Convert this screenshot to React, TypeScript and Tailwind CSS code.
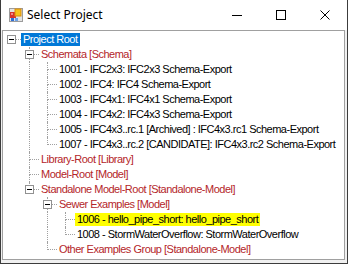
import React from "react";

type Node = {
  t: string;
  l: number;
  kids?: boolean;
  last?: boolean;
  red?: boolean;
  sel?: "blue" | "yellow";
};

const nodes: Node[] = [
  { t: "Project Root", l: 0, kids: true, last: true, sel: "blue" },
  { t: "Schemata [Schema]", l: 1, kids: true, red: true },
  { t: "1001 - IFC2x3: IFC2x3 Schema-Export", l: 2 },
  { t: "1002 - IFC4: IFC4 Schema-Export", l: 2 },
  { t: "1003 - IFC4x1: IFC4x1 Schema-Export", l: 2 },
  { t: "1004 - IFC4x2: IFC4x3 Schema-Export", l: 2 },
  { t: "1005 - IFC4x3..rc.1 [Archived] : IFC4x3.rc1 Schema-Export", l: 2 },
  { t: "1007 - IFC4x3..rc.2 [CANDIDATE]: IFC4x3.rc2 Schema-Export", l: 2, last: true },
  { t: "Library-Root [Library]", l: 1, red: true },
  { t: "Model-Root [Model]", l: 1, red: true },
  { t: "Standalone Model-Root [Standalone-Model]", l: 1, kids: true, last: true, red: true },
  { t: "Sewer Examples [Model]", l: 2, kids: true, red: true },
  { t: "1006 - hello_pipe_short: hello_pipe_short", l: 3, sel: "yellow" },
  { t: "1008 - StormWaterOverflow: StormWaterOverflow", l: 3, last: true },
  { t: "Other Examples Group [Standalone-Model]", l: 2, last: true, red: true },
];

// which ancestor columns still need a vertical line
function guides(list: Node[]) {
  const stack: boolean[] = [];
  return list.map((n) => {
    stack.length = n.l;
    const g = stack.slice();
    stack[n.l] = !n.last;
    return g;
  });
}

function AppIcon() {
  return (
    <svg width="16" height="16" viewBox="0 0 16 16">
      <rect x="1.5" y="1.5" width="13" height="13" fill="#e4e4e4" stroke="#9c9c9c" />
      <rect x="2" y="5" width="6" height="6" fill="#d8322d" />
      <rect x="3" y="6" width="2" height="2" fill="#f08a86" />
      <rect x="7" y="2" width="6" height="7" fill="#f6c31a" stroke="#d98b0c" strokeWidth="1" />
      <rect x="3" y="11" width="3" height="3" fill="#2f6fd6" />
      <rect x="7" y="11" width="3" height="3" fill="#6fa3e6" />
    </svg>
  );
}

function Row({ n, g }: { n: Node; g: boolean[] }) {
  const textCls =
    n.sel === "blue"
      ? "bg-[#0078d7] text-white"
      : n.sel === "yellow"
      ? "bg-[#ffff00] text-black"
      : n.red
      ? "text-[#b4262a]"
      : "text-black";
  return (
    <div className="flex h-[15px] items-center">
      {g.map((c, i) => (
        <div key={i} className="relative h-full w-[18px] shrink-0">
          {c && <div className="absolute left-[8px] top-0 h-full border-l border-dotted border-[#a0a0a0]" />}
        </div>
      ))}
      <div className="relative h-full w-[18px] shrink-0">
        {n.l > 0 && <div className="absolute left-[8px] top-0 h-[8px] border-l border-dotted border-[#a0a0a0]" />}
        {!n.last && <div className="absolute left-[8px] top-[8px] bottom-0 border-l border-dotted border-[#a0a0a0]" />}
        <div className="absolute left-[9px] right-0 top-[7px] border-t border-dotted border-[#a0a0a0]" />
        {n.kids && (
          <div className="absolute left-[4px] top-[3px] flex h-[9px] w-[9px] items-center justify-center border border-[#919191] bg-white">
            <div className="h-px w-[5px] bg-black" />
          </div>
        )}
      </div>
      <span className={`h-[13px] whitespace-nowrap px-[2px] leading-[13px] ${textCls}`}>{n.t}</span>
    </div>
  );
}

export default function App() {
  const g = guides(nodes);
  return (
    <div className="flex h-[264px] w-[348px] flex-col overflow-hidden border-x border-b border-[#3c3c3c] bg-[#f0f0f0]">
      <div className="flex h-[30px] shrink-0 items-center bg-white">
        <div className="ml-[7px] mr-[3px] flex">
          <AppIcon />
        </div>
        <span className="text-[12px] text-black font-['Noto_Sans',sans-serif]">Select Project</span>
        <div className="ml-auto flex h-full">
          <div className="flex h-full w-[44px] items-center justify-center">
            <div className="h-px w-[10px] bg-black" />
          </div>
          <div className="flex h-full w-[44px] items-center justify-center">
            <div className="h-[10px] w-[10px] border border-black" />
          </div>
          <div className="flex h-full w-[44px] items-center justify-center">
            <svg width="10" height="10" viewBox="0 0 10 10">
              <path d="M0.5 0.5 L9.5 9.5 M9.5 0.5 L0.5 9.5" stroke="#000" strokeWidth="1" />
            </svg>
          </div>
        </div>
      </div>
      <div className="flex flex-1 flex-col pl-[1px] pr-[2px] pb-[3px]">
        <div className="flex-1 overflow-hidden border border-[#a0a0a0] bg-white pt-[1px] text-[11px] tracking-[-0.5px] font-['Liberation_Sans',Arial,sans-serif]">
          {nodes.map((n, i) => (
            <Row key={i} n={n} g={g[i]} />
          ))}
        </div>
      </div>
    </div>
  );
}
